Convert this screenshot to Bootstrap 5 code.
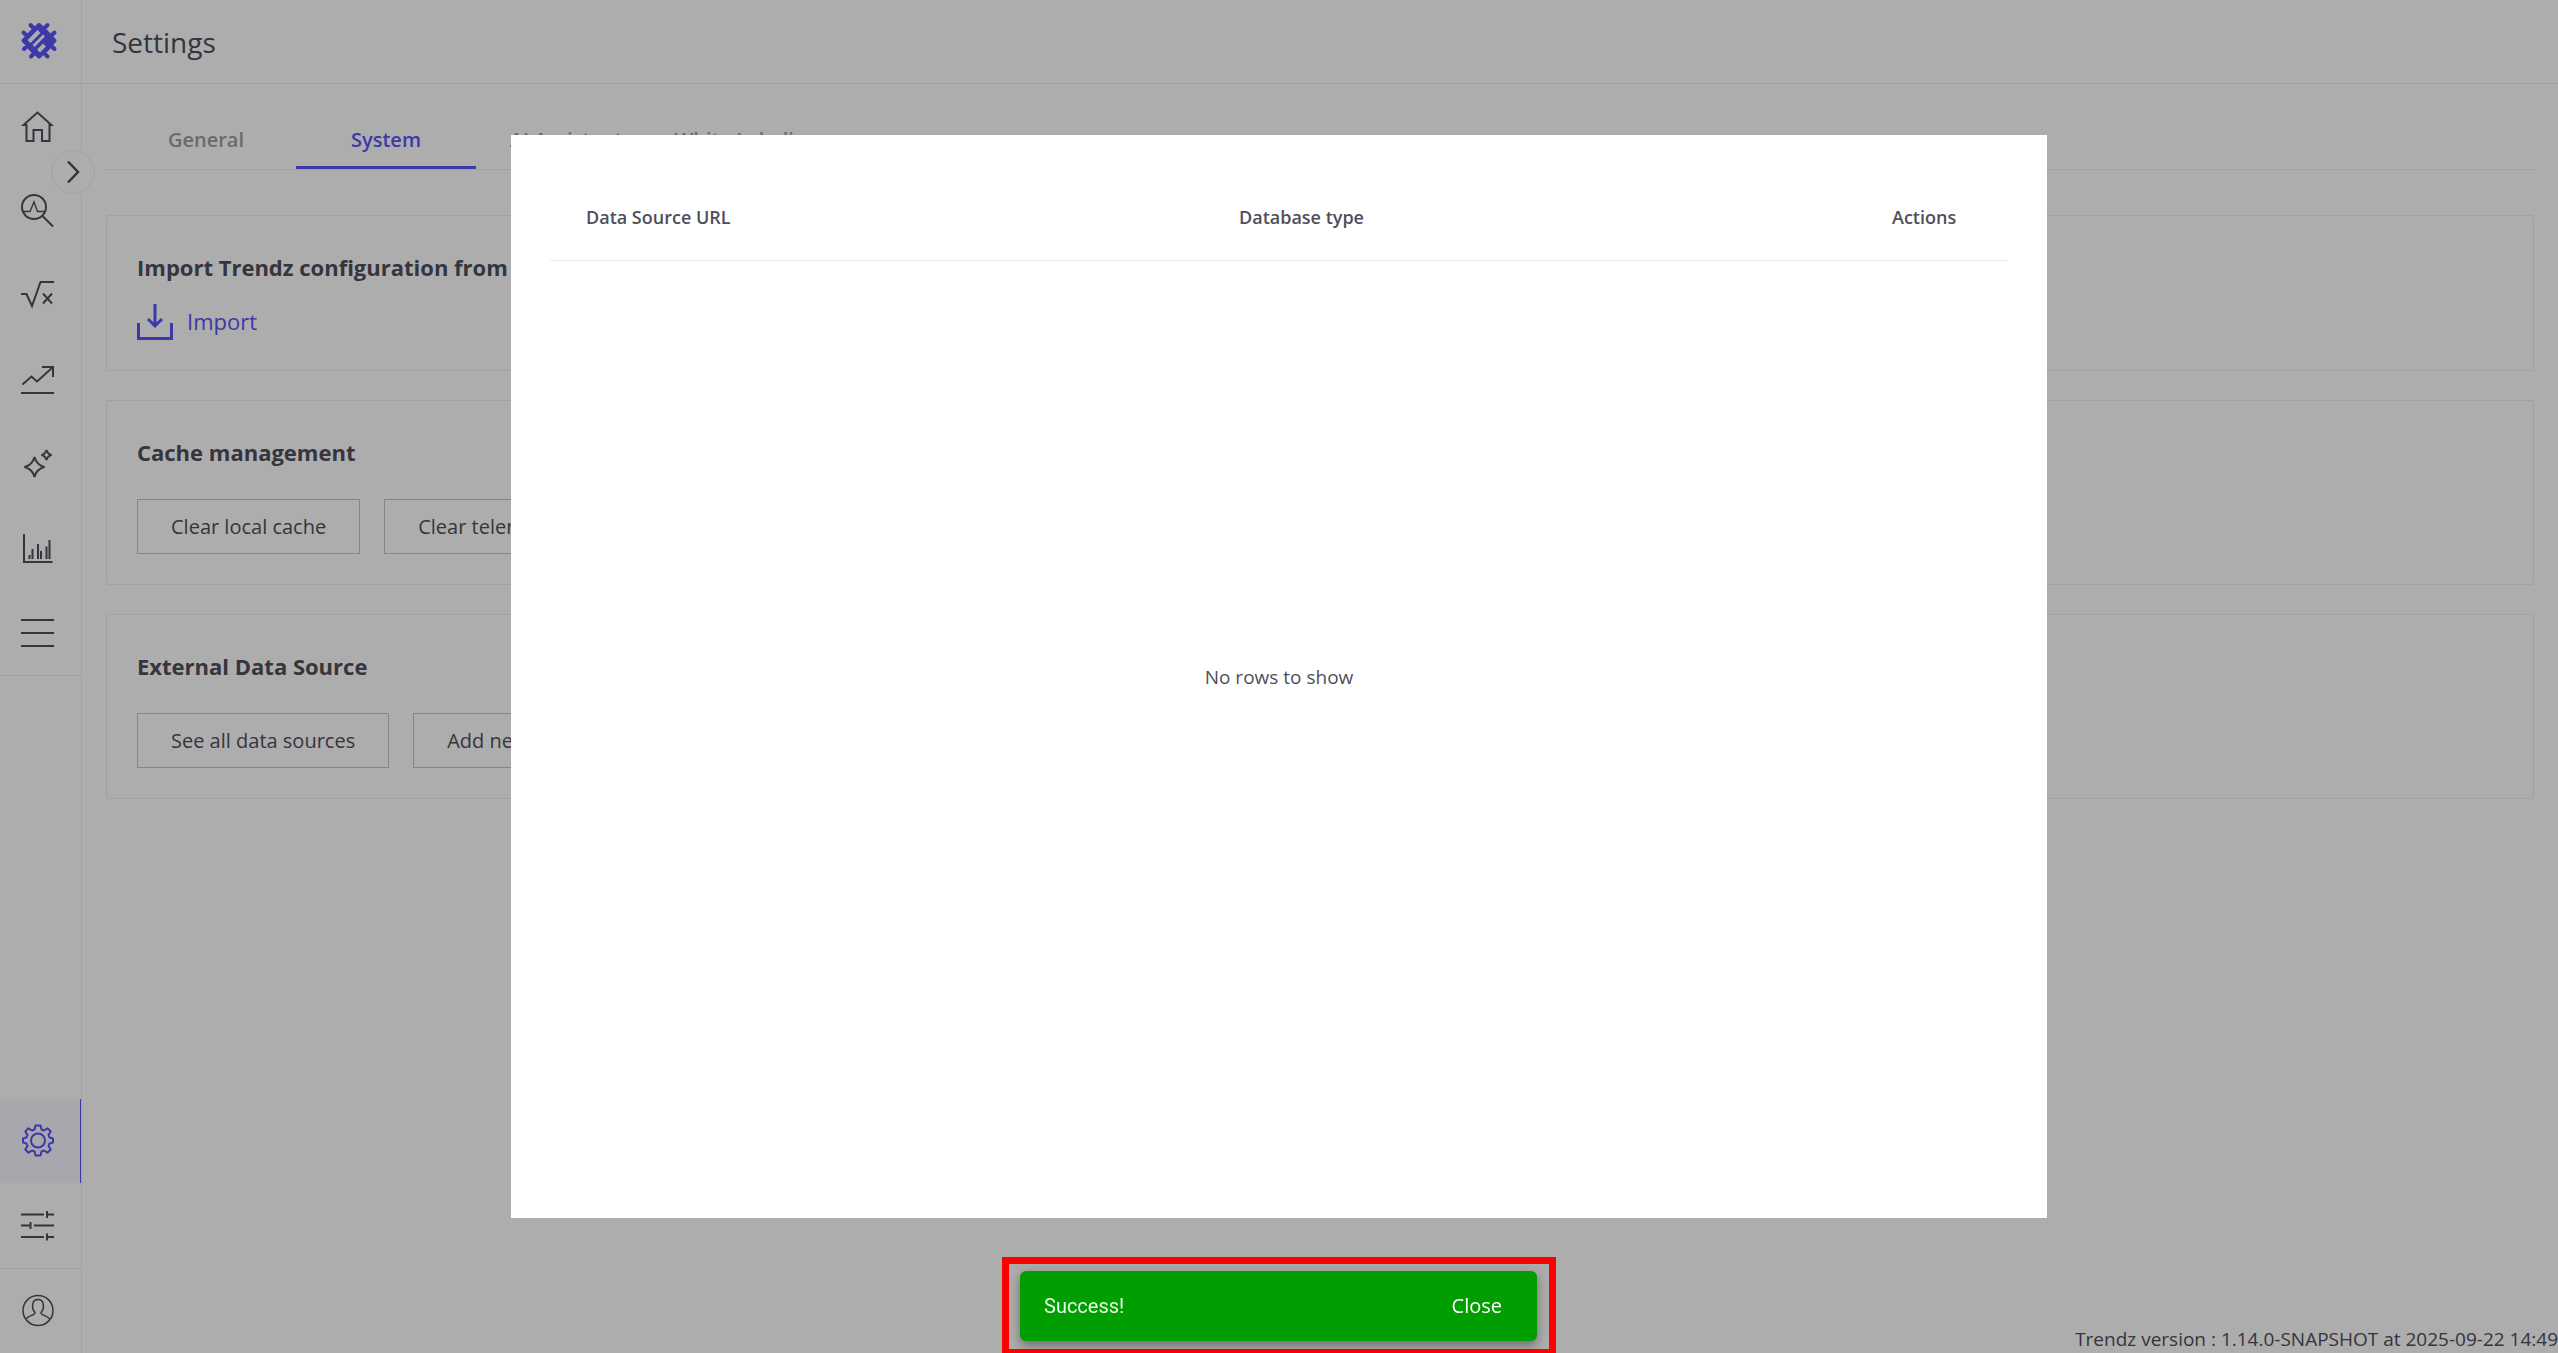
<!DOCTYPE html>
<html lang="en">
<head>
<meta charset="utf-8">
<meta name="viewport" content="width=device-width, initial-scale=1">
<title>Trendz - Settings</title>
<link href="https://cdn.jsdelivr.net/npm/bootstrap@5.3.0/dist/css/bootstrap.min.css" rel="stylesheet">
<style>
:root { --tz-blue: #5a54f9; --tz-ink: #4f4f5b; --tz-line: #eeeeef; }
body { font-family: "Open Sans", "Noto Sans", sans-serif; font-size: 20px; color: var(--tz-ink); }
.side-bar { width: 82px; border-right: 1px solid var(--tz-line); }
.logo-cell, .top-bar { height: 84px; border-bottom: 1px solid var(--tz-line); }
.side-item { display: flex; align-items: center; height: 84px; padding-left: 21px; color: var(--tz-ink); }
.side-item svg, .logo-cell svg { fill: none; stroke: currentColor; stroke-width: 2; }
.side-item.active { background: #f7f7ff; color: var(--tz-blue); border-right: 1px solid var(--tz-blue); }
.side-group { border-bottom: 1px solid var(--tz-line); padding: 1px 0; }
.side-top { padding-bottom: 2px; }
.expand-btn { position: absolute; left: 51px; top: 150px; width: 44px; height: 44px; border: 1px solid var(--tz-line); background: #fff; color: var(--tz-ink); z-index: 2; }
.page-title { font-size: 28px; line-height: 40px; font-weight: 400; padding-left: 30px; }
.content-area { padding: 0 24px; }
.tab-strip { height: 86px; padding-left: 10px; border-bottom: 1px solid var(--tz-line); margin-bottom: 45px; }
.tab-strip .nav-link { min-width: 180px; height: 85px; padding: 41px 16px 0; line-height: 30px; font-weight: 600; text-align: center; color: #9c9ca5; border-radius: 0; }
.tab-strip .nav-link.active { color: var(--tz-blue); border-bottom: 3px solid var(--tz-blue); }
.panel { border: 1px solid var(--tz-line); border-radius: 2px; padding: 30px; margin-bottom: 29px; }
.panel h2 { font-size: 22px; line-height: 42px; font-weight: 700; margin: 0; padding-bottom: 2px; }
.import-btn { border: 0; background: none; padding: 0; height: 36px; margin-top: 14px; font-size: 22px; line-height: 34px; gap: 14px; color: var(--tz-blue); }
.panel-btns { gap: 24px; margin-top: 24px; }
.panel-btns .btn { height: 55px; padding: 0 33px; border: 1px solid #c6c6c9; border-radius: 0; font-size: 20px; color: var(--tz-ink); }
.version-note { line-height: 28px; font-size: 19px; color: var(--tz-ink); }
.dim-layer { position: fixed; inset: 0; background: rgba(0,0,0,.32); z-index: 10; }
.source-dialog { width: 100%; max-width: 1536px; height: 80vh; background: #fff; padding: 39px; }
.source-table { height: 100%; table-layout: fixed; }
.source-table th { height: 86px; padding: 0 36px; font-size: 18px; line-height: 28px; font-weight: 600; vertical-align: middle; border-bottom: 1px solid #ececee; }
.source-table td { font-size: 19px; text-align: center; vertical-align: middle; padding-bottom: 86px; }
.col-wide { width: 653px; }
.toast-frame { position: fixed; left: 50%; bottom: 0; transform: translateX(-50%); width: 554px; z-index: 20; border: 7px solid #f00; border-bottom-width: 4px; padding: 7px 12px 8px 11px; }
.snack { height: 70px; border-radius: 6px; background: #009e00; color: #fff; padding: 0 35px 0 24px; box-shadow: 0 5px 8px rgba(0,0,0,.25), 0 2px 16px rgba(0,0,0,.16); }
.snack-text { font-family: Roboto, sans-serif; font-size: 20px; color: #e6f5e6; }
.snack button { border: 0; background: none; padding: 0; color: #fff; font-weight: 500; font-size: 20px; }
</style>
<script src="https://cdn.jsdelivr.net/npm/bootstrap@5.3.0/dist/js/bootstrap.bundle.min.js"></script>
</head>
<body class="overflow-hidden">
<div class="d-flex vh-100 position-relative">
  <nav class="side-bar d-flex flex-column flex-shrink-0" aria-label="Main">
    <a href="#" class="logo-cell d-block" aria-label="Trendz">
      <svg class="d-block" width="81" height="83" viewBox="0 0 81 83">
        <g style="color:#5a54f9" stroke-width="4" stroke-linecap="round">
          <path d="M33 28H45L52 35V47L45 54H33L26 47V35Z" fill="currentColor" stroke="none"/>
          <path d="M30.500 25L54.500 49M39 25L54.500 40.700M47.500 25L24 49M39 25L23.500 40.700M54.500 32.500L31 56.500M23.500 32.500L47.500 56.500M54.500 40.700L39 56.500M23.500 40.700L39 56.500"/>
        </g>
        <path d="M29 41.500L39 31.500M38.500 51L44.500 45" stroke="#fff" stroke-width="4"/>
        <path d="M33.500 46L44 35.500" stroke="#fff" stroke-width="2.600"/>
      </svg>
    </a>
    <div class="side-group side-top">
      <a href="#" class="side-item" aria-label="Home"><svg width="33" height="34" viewBox="0 0 33 34"><path d="M2.500 15L16.500 2.500L30.500 15H28.500V31H21V20H12.500V31H5.500V15Z"/></svg></a>
      <a href="#" class="side-item" aria-label="Explore"><svg width="33" height="34" viewBox="0 0 33 34"><circle cx="13" cy="13" r="12"/><path d="M21.500 22L32 32.500"/><path d="M2 17.500H9L13 8L16.500 17.500H24" stroke-width="1.400"/></svg></a>
      <a href="#" class="side-item" aria-label="Calculations"><svg width="33" height="34" viewBox="0 0 33 34"><path d="M0 16H5.500L11 28L19.500 4H33M22 15.500L31 25.500M31 15.500L22 25.500"/></svg></a>
      <a href="#" class="side-item" aria-label="Predictions"><svg width="33" height="34" viewBox="0 0 33 34"><path d="M1.500 22.500L10.500 14.500L16 19.500L31.500 5.500M21 5H32V15M0 31H33"/></svg></a>
      <a href="#" class="side-item" aria-label="Assistant"><svg width="33" height="34" viewBox="0 0 33 34"><path d="M13.500 11Q15.500 19 23.500 21Q15.500 23 13.500 31Q11.500 23 3.500 21Q11.500 19 13.500 11ZM25.500 4Q26.500 8 30.500 9Q26.500 10 25.500 14Q24.500 10 20.500 9Q24.500 8 25.500 4Z"/></svg></a>
      <a href="#" class="side-item" aria-label="Dashboards"><svg width="33" height="34" viewBox="0 0 33 34"><path d="M3 4V32H31.500M8.500 29V25M11.500 29V19M17 29V14M20 29V21M25.500 29V16.500M28.500 29V10"/></svg></a>
      <a href="#" class="side-item" aria-label="Menu"><svg width="33" height="34" viewBox="0 0 33 34"><path d="M0 6H33M0 19H33M0 32H33"/></svg></a>
    </div>
    <div class="side-group mt-auto">
      <a href="#" class="side-item active" aria-label="Settings"><svg width="33" height="34" viewBox="0 0 33 34"><circle cx="17" cy="16.500" r="7"/><path stroke-linejoin="round" d="M14.500 1.500H19.500L20.500 5.500L23 6.500L26.500 4.300L29.700 7.500L27.500 11L28.500 13.500L32 14.500V18.500L28.500 19.500L27.500 22L29.700 25.500L26.500 28.700L23 26.500L20.500 27.500L19.500 31.500H14.500L13.500 27.500L11 26.500L7.500 28.700L4.300 25.500L6.500 22L5.500 19.500L2 18.500V14.500L5.500 13.500L6.500 11L4.300 7.500L7.500 4.300L11 6.500L13.500 5.500Z"/></svg></a>
      <a href="#" class="side-item" aria-label="Filters"><svg width="33" height="34" viewBox="0 0 33 34"><path d="M0 6.500H23M26 3V10M26 6.500H33M0 17.500H9M9.500 14V21M13 17.500H33M0 29H23M26 25.500V32.500M26 29H33"/></svg></a>
    </div>
    <a href="#" class="side-item" aria-label="Profile"><svg width="33" height="34" viewBox="0 0 33 34"><circle cx="17" cy="16.500" r="15" stroke-width="1.500"/><path stroke-width="1.500" d="M5.500 24.500C7.500 21.500 14 21.500 14 18.500C11 15.500 11.500 11 12 9Q13 5.500 17 5.500T22 9C22.500 11 23 15.500 20 18.500C20 21.500 26.500 21.500 28.500 25"/></svg></a>
  </nav>
  <button type="button" class="expand-btn rounded-circle p-0 d-flex align-items-center justify-content-center" aria-label="Expand menu"><svg width="14" height="24" viewBox="0 0 14 24" fill="none" stroke="currentColor" stroke-width="2.500"><path d="M2 1.500L12 12L2 22.500"/></svg></button>

  <div class="flex-grow-1 d-flex flex-column">
    <header class="top-bar d-flex align-items-center"><h1 class="page-title m-0">Settings</h1></header>
    <main class="content-area flex-grow-1">
      <div class="nav tab-strip flex-nowrap">
        <a class="nav-link" href="#">General</a>
        <a class="nav-link active" href="#">System</a>
        <a class="nav-link" href="#">AI Assistant</a>
        <a class="nav-link" href="#">White Labeling</a>
      </div>
      <section class="panel">
        <h2>Import Trendz configuration from file</h2>
        <button type="button" class="import-btn d-flex align-items-start"><svg width="36" height="36" viewBox="0 0 36 36" fill="none" stroke="currentColor" stroke-width="3"><path d="M1.500 19V34.500H34.500V19M18 0V22M11 15L18 22L25 15"/></svg>Import</button>
      </section>
      <section class="panel">
        <h2>Cache management</h2>
        <div class="panel-btns d-flex"><button type="button" class="btn">Clear local cache</button><button type="button" class="btn">Clear telemetry cache</button></div>
      </section>
      <section class="panel">
        <h2>External Data Source</h2>
        <div class="panel-btns d-flex"><button type="button" class="btn">See all data sources</button><button type="button" class="btn">Add new data source</button></div>
      </section>
    </main>
    <footer class="version-note text-end">Trendz version : 1.14.0-SNAPSHOT at 2025-09-22 14:49</footer>
  </div>
</div>

<div class="dim-layer d-flex align-items-center justify-content-center">
  <div class="source-dialog" role="dialog" aria-label="Data sources">
    <table class="source-table w-100">
      <thead><tr><th class="col-wide">Data Source URL</th><th class="col-wide">Database type</th><th>Actions</th></tr></thead>
      <tbody><tr><td colspan="3">No rows to show</td></tr></tbody>
    </table>
  </div>
</div>

<div class="toast-frame">
  <div class="snack d-flex align-items-center justify-content-between" role="status"><span class="snack-text">Success!</span><button type="button">Close</button></div>
</div>
</body>
</html>
